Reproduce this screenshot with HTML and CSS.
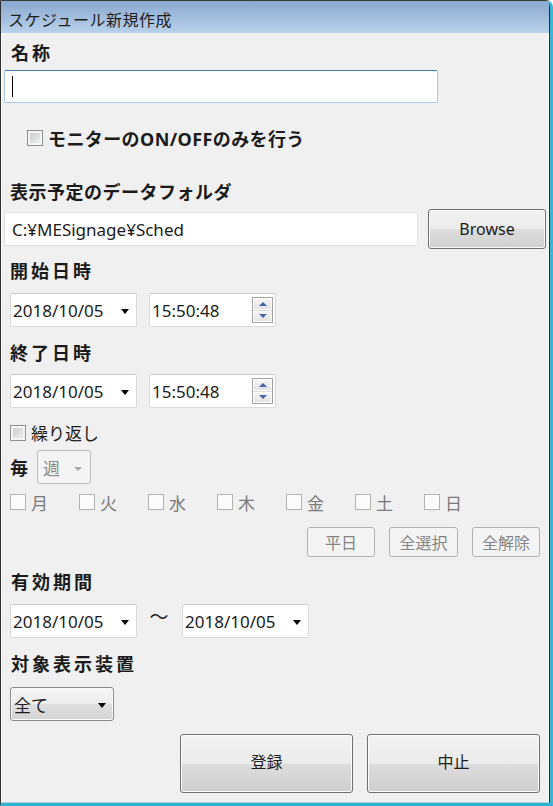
FILE: index.html
```html
<!DOCTYPE html>
<html lang="ja">
<head>
    <meta charset="UTF-8">
    <meta name="viewport" content="width=device-width, initial-scale=1.0">
    <title>スケジュール新規作成</title>
    <link rel="stylesheet" href="styles.css">
</head>
<body>
<div class="window">
    <div class="titlebar">スケジュール新規作成</div>

    <div class="client">
        <div class="label name-label">名称</div>
        <div class="textbox name-box"><span class="caret"></span></div>

        <div class="check-row monitor-row">
            <span class="checkbox"></span>
            <span class="monitor-text">モニターのON/OFFのみを行う</span>
        </div>

        <div class="label folder-label">表示予定のデータフォルダ</div>
        <div class="folder-row">
            <div class="textbox folder-box">C:¥MESignage¥Sched</div>
            <button class="btn browse">Browse</button>
        </div>

        <!-- 開始日時 -->
        <div class="label start-label">開始日時</div>
        <div class="picker-row start-row">
            <div class="picker date">2018/10/05<span class="arrow"></span></div>
            <div class="picker time">15:50:48
                <span class="spinner"><span class="spin up"></span><span class="spin down"></span></span>
            </div>
        </div>

        <!-- 終了日時 -->
        <div class="label end-label">終了日時</div>
        <div class="picker-row end-row">
            <div class="picker date">2018/10/05<span class="arrow"></span></div>
            <div class="picker time">15:50:48
                <span class="spinner"><span class="spin up"></span><span class="spin down"></span></span>
            </div>
        </div>

        <!-- 繰り返し -->
        <div class="check-row repeat-row">
            <span class="checkbox"></span>
            <span>繰り返し</span>
        </div>
        <div class="every-row">
            <span class="every-label">毎</span>
            <div class="combo disabled">週<span class="arrow"></span></div>
        </div>
        <div class="days-row">
            <div class="day"><span class="checkbox off"></span>月</div>
            <div class="day"><span class="checkbox off"></span>火</div>
            <div class="day"><span class="checkbox off"></span>水</div>
            <div class="day"><span class="checkbox off"></span>木</div>
            <div class="day"><span class="checkbox off"></span>金</div>
            <div class="day"><span class="checkbox off"></span>土</div>
            <div class="day"><span class="checkbox off"></span>日</div>
        </div>
        <div class="select-buttons">
            <button class="small-btn">平日</button>
            <button class="small-btn wide">全選択</button>
            <button class="small-btn">全解除</button>
        </div>

        <!-- 有効期間 -->
        <div class="label period-label">有効期間</div>
        <div class="picker-row period-row">
            <div class="picker date">2018/10/05<span class="arrow"></span></div>
            <span class="tilde">〜</span>
            <div class="picker date">2018/10/05<span class="arrow"></span></div>
        </div>

        <div class="label target-label">対象表示装置</div>
        <div class="combo target">全て<span class="arrow"></span></div>

        <div class="footer">
            <button class="btn big">登録</button>
            <button class="btn big">中止</button>
        </div>
    </div>
</div>
</body>
</html>
```

FILE: styles.css
```css
* { box-sizing: border-box; }
body {
    margin: 0;
    font-family: "Noto Sans", "Noto Sans CJK JP", sans-serif;
    color: #1b1b1b;
    background: #ffffff;
}

/* ウィンドウ枠 */
.window {
    width: 553px;
    height: 806px;
    display: flex;
    flex-direction: column;
    border-left: 1px solid #2e2e2e;
    border-top: 1px solid #3c3c3c;
    border-right: 3px solid #3ab5d5;
    border-bottom: 3px solid #2fb2cf;
    border-top-right-radius: 7px;
    overflow: hidden;
    background: #f0f0f0;
}
.titlebar {
    height: 32px;
    flex: none;
    display: flex;
    align-items: center;
    padding: 3px 0 0 7px;
    font-family: "Noto Sans CJK JP", sans-serif;
    font-size: 16px;
    letter-spacing: 0.5px;
    color: #1e1e1e;
    background: linear-gradient(#89a9d0, #b9d1ea);
    border-right: 1px solid #2c2c2c;
}
.client {
    flex: 1;
    border-left: 1px solid #ffffff;
    border-right: 1px solid #2c2c2c;
    border-bottom: 1px solid #a9d4e8;
    box-shadow: inset -1px 0 #ffffff;
}

/* 見出し */
.label {
    height: 26px;
    line-height: 26px;
    padding-left: 9px;
    font-family: "Noto Sans CJK JP", sans-serif;
    font-size: 18px;
    font-weight: bold;
    letter-spacing: 3px;
    color: #1a1a1a;
}
.name-label { margin-top: 6px; }
.folder-label { margin-top: 28px; letter-spacing: 0.5px; padding-left: 8px; }
.start-label { margin-top: 8px; padding-left: 8px; }
.end-label { margin-top: 12px; padding-left: 8px; }
.period-label { margin-top: 11px; }
.target-label { margin-top: 12px; }

/* テキストボックス */
.textbox {
    background: #ffffff;
    border: 1px solid #dcdcdc;
    border-radius: 2px;
    display: flex;
    align-items: center;
    font-size: 17px;
}
.name-box {
    margin: 5px 0 0 2px;
    width: 434px;
    height: 33px;
    padding-left: 7px;
    border-color: #a7cbe8;
    border-top-color: #3d7bad;
}
.caret {
    width: 1px;
    height: 21px;
    background: #000000;
}

/* チェックボックス */
.check-row {
    display: flex;
    align-items: center;
}
.monitor-row {
    margin-top: 23px;
    height: 24px;
    padding-left: 25px;
    gap: 5px;
}
.monitor-text {
    font-size: 18px;
    font-weight: bold;
    letter-spacing: 0.4px;
}
.checkbox {
    width: 16px;
    height: 16px;
    flex: none;
    border: 1px solid #8e8f8f;
    background: linear-gradient(135deg, #c4c6c9, #f6f6f6);
    box-shadow: inset 0 0 0 2px #f6f6f6;
}
.checkbox.off {
    border-color: #b3b3b3;
    background: #fbfbfb;
    box-shadow: none;
}

.folder-row {
    margin-top: 5px;
    height: 40px;
    display: flex;
    align-items: center;
    gap: 10px;
    padding-left: 2px;
}
.folder-box {
    width: 414px;
    height: 34px;
    padding-left: 7px;
    border-color: #e0e0e0;
}

/* ボタン */
.btn {
    font-family: "Noto Sans", "Noto Sans CJK JP", sans-serif;
    font-size: 16px;
    color: #1b1b1b;
    border: 1px solid #707070;
    border-radius: 3px;
    background: linear-gradient(#f2f2f2 0%, #ebebeb 50%, #dddddd 51%, #cfcfcf 100%);
    box-shadow: inset 0 0 0 1px #fbfbfb;
    padding: 0;
}
.browse {
    width: 118px;
    height: 40px;
}

/* 日付・時刻 */
.picker-row {
    display: flex;
    align-items: center;
    gap: 12px;
    padding-left: 8px;
    height: 34px;
}
.start-row { margin-top: 10px; }
.end-row { margin-top: 9px; }
.period-row { margin-top: 10px; gap: 0; }
.picker {
    width: 127px;
    height: 34px;
    background: #ffffff;
    border: 1px solid #dadada;
    border-top-color: #cacaca;
    border-radius: 2px;
    display: flex;
    align-items: center;
    padding-left: 2px;
    font-size: 17px;
    color: #1b1b1b;
}
.arrow {
    margin-left: auto;
    margin-right: 7px;
    margin-top: 3px;
    width: 0;
    height: 0;
    border-left: 4.5px solid transparent;
    border-right: 4.5px solid transparent;
    border-top: 5px solid #000000;
}
.spinner {
    margin-left: auto;
    margin-right: 2px;
    width: 21px;
    height: 26px;
    display: flex;
    flex-direction: column;
    border: 1px solid #a3a3a3;
    background: #dcdcdc;
    gap: 1px;
}
.spin {
    flex: 1;
    display: flex;
    align-items: center;
    justify-content: center;
    background: linear-gradient(#f5f5f5, #e3e3e3);
    border: 1px solid #ffffff;
}
.spin::after {
    content: "";
    width: 0;
    height: 0;
    border-left: 4px solid transparent;
    border-right: 4px solid transparent;
}
.spin.up::after { border-bottom: 4px solid #4566a6; }
.spin.down::after { border-top: 4px solid #4566a6; }

.tilde {
    width: 22px;
    margin: 0 12px 12px 11px;
    font-family: "Noto Sans CJK JP", sans-serif;
    font-size: 19px;
    line-height: 1;
    text-align: center;
}

/* 繰り返し */
.repeat-row {
    margin-top: 13px;
    height: 23px;
    padding-left: 8px;
    gap: 5px;
    font-size: 17px;
}
.every-row {
    margin-top: 6px;
    height: 34px;
    display: flex;
    align-items: center;
    padding-left: 8px;
    gap: 9px;
}
.every-label {
    font-family: "Noto Sans CJK JP", sans-serif;
    font-size: 18px;
    font-weight: bold;
}
.combo {
    height: 34px;
    display: flex;
    align-items: center;
    padding-left: 5px;
    font-size: 17px;
    border: 1px solid #8a8a8a;
    border-radius: 3px;
    background: linear-gradient(#f7f7f7 0%, #ececec 50%, #dfdfdf 51%, #d3d3d3 100%);
    box-shadow: inset 0 0 0 1px #fbfbfb;
}
.combo.disabled {
    width: 54px;
    color: #8a8a8a;
    border-color: #b8bcbf;
    background: #f4f4f4;
    box-shadow: none;
}
.combo.disabled .arrow {
    margin-right: 8px;
    border-top-color: #a8a8a8;
    border-left-width: 4px;
    border-right-width: 4px;
    border-top-width: 4px;
}
.combo.target {
    margin: 11px 0 0 8px;
    width: 104px;
    padding-left: 3px;
}

.days-row {
    margin-top: 8px;
    height: 20px;
    display: flex;
    align-items: center;
    padding-left: 8px;
}
.day {
    width: 69px;
    display: flex;
    align-items: center;
    gap: 5px;
    font-size: 17px;
    color: #7a7a7a;
}

.select-buttons {
    margin-top: 15px;
    height: 30px;
    display: flex;
    justify-content: flex-end;
    gap: 14px;
    padding-right: 9px;
}
.small-btn {
    width: 68px;
    height: 30px;
    padding: 0;
    font-family: "Noto Sans CJK JP", sans-serif;
    font-size: 16px;
    color: #848484;
    border: 1px solid #adb2b5;
    border-radius: 3px;
    background: #f4f4f4;
}
.small-btn.wide { width: 69px; }

.footer {
    margin-top: 13px;
    display: flex;
    justify-content: flex-end;
    gap: 14px;
    padding-right: 9px;
}
.big {
    width: 173px;
    height: 59px;
    padding-bottom: 5px;
    font-family: "Noto Sans CJK JP", sans-serif;
}
```
